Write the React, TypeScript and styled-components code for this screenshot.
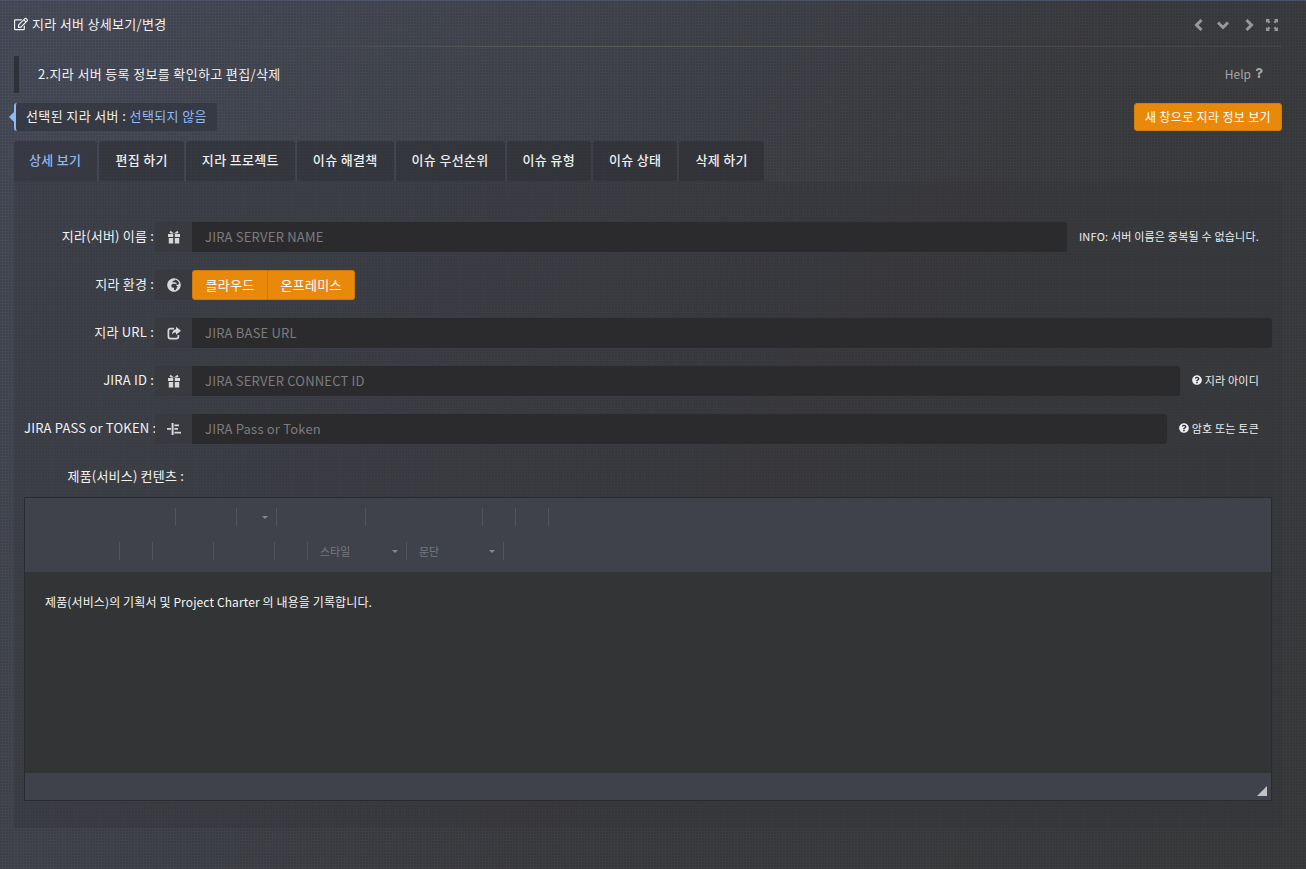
import React from 'react'
import styled, { createGlobalStyle } from 'styled-components'
import { FaGlobeAfrica, FaQuestion, FaQuestionCircle, FaRegEdit } from 'react-icons/fa'

const GlobalStyle = createGlobalStyle`
  html, body {
    margin: 0;
    padding: 0;
    height: 100%;
    background: #3a3b3f;
  }
  * { box-sizing: border-box; }
  body {
    font-family: "Noto Sans CJK KR", "Noto Sans", sans-serif;
    font-size: 12px;
    color: #fff;
    overflow: hidden;
  }
`

const dots = `radial-gradient(circle at 1px 1px, rgba(0,0,0,.09) 1px, transparent 1.2px)`

const Page = styled.div`
  width: 1306px;
  height: 869px;
  padding: 0 24px 0 14px;
  border-top: 1px solid #4d5366;
  background-image: ${dots}, linear-gradient(125deg, #474c5a 0%, #43464f 28%, #3c3d41 58%, #3a3b3d 100%);
  background-size: 3px 3px, auto;
`

const TitleBar = styled.div`
  height: 46px;
  padding-top: 10px;
  display: flex;
  justify-content: space-between;
  align-items: flex-start;
  background-image: linear-gradient(90deg, transparent 15%, rgba(200,190,160,.2) 45%, rgba(255,255,255,.06) 100%);
  background-size: 100% 1px;
  background-position: bottom;
  background-repeat: no-repeat;
`

const Title = styled.h1`
  margin: 0;
  display: flex;
  align-items: center;
  gap: 4px;
  font-size: 13px;
  line-height: 26px;
  font-weight: 400;
  letter-spacing: .3px;
  color: #f2f2f2;
  svg { width: 14px; height: 14px; }
`

const Controls = styled.div`
  display: flex;
  gap: 14px;
  align-items: center;
  height: 28px;
  color: #97989a;
  padding-right: 4px;
  svg { width: 12px; height: 12px; display: block; }
  svg:nth-child(1) { margin-right: -2px; }
  svg:nth-child(3) { margin-right: -3px; }
`

const NoticeRow = styled.div`
  margin-top: 9px;
  height: 37px;
  display: flex;
  justify-content: space-between;
  align-items: center;
  border-left: 5px solid #2f3138;
  padding-left: 19px;
`

const NoticeText = styled.div`
  font-size: 13px;
  letter-spacing: .35px;
  padding-bottom: 3px;
  color: #f0f0f0;
`

const Help = styled.div`
  display: flex;
  align-items: center;
  gap: 4px;
  height: 24px;
  padding: 0 9px 3px;
  margin-right: 10px;
  background: rgba(60,60,62,.45);
  border-radius: 3px;
  color: #a5a5a7;
  font-size: 12px;
  svg { width: 8px; height: 10px; }
`

const SelectedRow = styled.div`
  margin-top: 10px;
  height: 28px;
  display: flex;
  justify-content: space-between;
  align-items: center;
`

const SelectedTag = styled.div`
  position: relative;
  height: 28px;
  line-height: 25px;
  padding: 0 10px 0 10px;
  background: #363a44;
  border-left: 2px solid #8fb8f0;
  border-radius: 3px;
  font-size: 13px;
  letter-spacing: .38px;
  color: #f0f0f0;
  &::before {
    content: '';
    position: absolute;
    left: -7px;
    top: 8px;
    border: 6px solid transparent;
    border-left: 0;
    border-right-color: #8fb8f0;
  }
  b { font-weight: 400; color: #8fb9f5; }
`

const OrangeButton = styled.button`
  height: 28px;
  padding: 0 10px 2px;
  background: #e8890c;
  border: 1px solid #d27c0a;
  border-radius: 3px;
  color: #fff;
  font: inherit;
  font-size: 12px;
  letter-spacing: .35px;
`

const Tabs = styled.div`
  margin-top: 10px;
  display: flex;
  gap: 2px;
  height: 40px;
`

const Tab = styled.div<{ $active?: boolean }>`
  padding: 0 16px 3px;
  display: flex;
  align-items: center;
  font-size: 13px;
  font-weight: 500;
  letter-spacing: .33px;
  background: ${p => (p.$active ? 'rgba(52,54,62,.75)' : 'rgba(42,43,48,.55)')};
  color: ${p => (p.$active ? '#8fb6ee' : '#eee')};
  border-radius: 3px 3px 0 0;
  &:first-child { padding-left: 15px; }
`

const Panel = styled.div`
  height: 647px;
  width: 1268px;
  padding: 41px 10px 0;
  background: rgba(52,53,57,.4);
`

const FormRow = styled.div`
  height: 30px;
  margin-bottom: 18px;
  display: flex;
`

const Label = styled.label`
  width: 131px;
  flex: none;
  padding-right: 1px;
  text-align: right;
  line-height: 28px;
  font-size: 13px;
  letter-spacing: .2px;
  color: #f2f2f2;
  white-space: nowrap;
`

const Addon = styled.span`
  width: 37px;
  flex: none;
  display: flex;
  align-items: center;
  justify-content: center;
  background: #393a3f;
  color: #d8d8d8;
  svg { width: 14px; height: 14px; }
`

const Input = styled.input`
  flex: 1;
  min-width: 0;
  height: 30px;
  padding: 0 13px 2px;
  background: #2b2b2d;
  border: 0;
  border-radius: 0 3px 3px 0;
  color: #fff;
  font: inherit;
  font-size: 13px;
  letter-spacing: .2px;
  &::placeholder { color: #7c7c7e; opacity: 1; }
`

const Note = styled.span`
  flex: none;
  display: flex;
  align-items: center;
  gap: 3px;
  padding: 0 13px 2px 12px;
  font-size: 11px;
  letter-spacing: .2px;
  color: #eee;
  background: rgba(58,58,60,.35);
  svg { width: 10px; height: 10px; }
`

const ButtonGroup = styled.div`
  display: flex;
`

const GroupButton = styled.button`
  height: 30px;
  padding: 0 12.5px 2px;
  background: #e8890c;
  border: 1px solid #cf7a0a;
  color: #fff;
  font: inherit;
  font-size: 13px;
  letter-spacing: .3px;
  &:first-child { border-radius: 3px 0 0 3px; }
  &:last-child { border-radius: 0 3px 3px 0; border-left-width: 0; }
`

const ContentLabel = styled.div`
  width: 160px;
  text-align: right;
  height: 35px;
  padding-top: 4px;
  font-size: 13px;
  letter-spacing: .2px;
  color: #f2f2f2;
  line-height: 20px;
`

const Editor = styled.div`
  width: 1248px;
  height: 304px;
  border: 1px solid #2a2b2e;
  display: flex;
  flex-direction: column;
`

const Toolbar = styled.div`
  height: 74px;
  background: #3f424b;
  padding-top: 10px;
`

const ToolRow = styled.div`
  height: 18px;
  margin-bottom: 16px;
  display: flex;
  align-items: center;
  color: #77797f;
  font-size: 11px;
`

const ToolGroup = styled.div<{ $w: number }>`
  width: ${p => p.$w}px;
  height: 18px;
  flex: none;
  display: flex;
  align-items: center;
  justify-content: space-between;
  padding: 0 8px 0 12px;
  border-right: 1px solid #53555d;
`

const Caret = styled.i`
  width: 0;
  height: 0;
  border: 3px solid transparent;
  border-bottom: 0;
  border-top: 3px solid #85878c;
`

const EditorBody = styled.div`
  flex: 1;
  background: #333436;
  padding: 21px 20px;
  font-size: 12px;
  letter-spacing: .12px;
  line-height: 18px;
  color: #f4f4f4;
`

const EditorFooter = styled.div`
  height: 27px;
  background: #3f424b;
  display: flex;
  justify-content: flex-end;
  align-items: flex-end;
  padding: 0 4px 4px 0;
`

const Grip = styled.i`
  width: 0;
  height: 0;
  border-left: 10px solid transparent;
  border-bottom: 10px solid #c2c2c2;
`

const TokenIcon = () => (
  <svg viewBox="0 0 14 14" fill="currentColor">
    <path d="M0 6h4v1.8H0zM4.6 1h2v12h-2zM7.4 2.4H12v1.8H7.4zM7.4 6H11v1.8H7.4zM7.4 9.8H14v1.8H7.4z" />
  </svg>
)

const GiftIcon = () => (
  <svg viewBox="0 0 14 14" fill="currentColor">
    <path d="M1 4h5.2v3H1zM7.8 4H13v3H7.8zM1.8 8h4.4v5.4H1.8zM7.8 8h4.4v5.4H7.8z" />
    <path d="M7 3.6 3.6.8 2.4 2.4 4 3.6zM7 3.6 10.4.8l1.2 1.6L10 3.6z" />
  </svg>
)

const ShareIcon = () => (
  <svg viewBox="0 0 14 14">
    <path d="M7 2.6H3.4A2 2 0 0 0 1.4 4.6v6a2 2 0 0 0 2 2h6a2 2 0 0 0 2-2V9" fill="none" stroke="currentColor" strokeWidth="1.7" />
    <path d="M9 .8 14 4.8 9 8.8V6.4C7 6.4 5.8 7 5 8.6 5 5.6 6.6 3.4 9 3.2z" fill="currentColor" />
  </svg>
)

const ChevronIcon = ({ d }: { d: string }) => (
  <svg viewBox="0 0 12 12" fill="none" stroke="currentColor" strokeWidth="3">
    <path d={d} />
  </svg>
)

const FullscreenIcon = () => (
  <svg viewBox="0 0 12 12" fill="currentColor">
    <path d="M0 0h4L2.8 1.2 4.4 2.8 2.8 4.4 1.2 2.8 0 4zM12 0v4L10.8 2.8 9.2 4.4 7.6 2.8 9.2 1.2 8 0zM0 12V8l1.2 1.2 1.6-1.6 1.6 1.6-1.6 1.6L4 12zM12 12H8l1.2-1.2-1.6-1.6 1.6-1.6 1.6 1.6L12 8z" />
  </svg>
)

const tabs = ['상세 보기', '편집 하기', '지라 프로젝트', '이슈 해결책', '이슈 우선순위', '이슈 유형', '이슈 상태', '삭제 하기']

export default function App() {
  return (
    <Page>
      <GlobalStyle />
      <TitleBar>
        <Title><FaRegEdit />지라 서버 상세보기/변경</Title>
        <Controls>
          <ChevronIcon d="M8.5 1 3.5 6l5 5" />
          <ChevronIcon d="M1 3.5l5 5 5-5" />
          <ChevronIcon d="M3.5 1l5 5-5 5" />
          <FullscreenIcon />
        </Controls>
      </TitleBar>

      <NoticeRow>
        <NoticeText>2.지라 서버 등록 정보를 확인하고 편집/삭제</NoticeText>
        <Help>Help <FaQuestion /></Help>
      </NoticeRow>

      <SelectedRow>
        <SelectedTag>선택된 지라 서버 : <b>선택되지 않음</b></SelectedTag>
        <OrangeButton>새 창으로 지라 정보 보기</OrangeButton>
      </SelectedRow>

      <Tabs>
        {tabs.map((t, i) => <Tab key={t} $active={i === 0}>{t}</Tab>)}
      </Tabs>

      <Panel>
        <FormRow>
          <Label>지라(서버) 이름 :</Label>
          <Addon><GiftIcon /></Addon>
          <Input placeholder="JIRA SERVER NAME" />
          <Note>INFO: 서버 이름은 중복될 수 없습니다.</Note>
        </FormRow>
        <FormRow>
          <Label>지라 환경 :</Label>
          <Addon><FaGlobeAfrica /></Addon>
          <ButtonGroup>
            <GroupButton>클라우드</GroupButton>
            <GroupButton>온프레미스</GroupButton>
          </ButtonGroup>
        </FormRow>
        <FormRow>
          <Label>지라 URL :</Label>
          <Addon><ShareIcon /></Addon>
          <Input placeholder="JIRA BASE URL" />
        </FormRow>
        <FormRow>
          <Label>JIRA ID :</Label>
          <Addon><GiftIcon /></Addon>
          <Input placeholder="JIRA SERVER CONNECT ID" />
          <Note><FaQuestionCircle /> 지라 아이디</Note>
        </FormRow>
        <FormRow>
          <Label>JIRA PASS or TOKEN :</Label>
          <Addon><TokenIcon /></Addon>
          <Input placeholder="JIRA Pass or Token" />
          <Note><FaQuestionCircle /> 암호 또는 토큰</Note>
        </FormRow>

        <ContentLabel>제품(서비스) 컨텐츠 :</ContentLabel>
        <Editor>
          <Toolbar>
            <ToolRow>
              <ToolGroup $w={151} />
              <ToolGroup $w={61} />
              <ToolGroup $w={40}><span /><Caret /></ToolGroup>
              <ToolGroup $w={89} />
              <ToolGroup $w={117} />
              <ToolGroup $w={33} />
              <ToolGroup $w={33} />
            </ToolRow>
            <ToolRow>
              <ToolGroup $w={95} />
              <ToolGroup $w={33} />
              <ToolGroup $w={61} />
              <ToolGroup $w={61} />
              <ToolGroup $w={33} />
              <ToolGroup $w={99}>스타일<Caret /></ToolGroup>
              <ToolGroup $w={97}>문단<Caret /></ToolGroup>
            </ToolRow>
          </Toolbar>
          <EditorBody>제품(서비스)의 기획서 및 Project Charter 의 내용을 기록합니다.</EditorBody>
          <EditorFooter><Grip /></EditorFooter>
        </Editor>
      </Panel>
    </Page>
  )
}
